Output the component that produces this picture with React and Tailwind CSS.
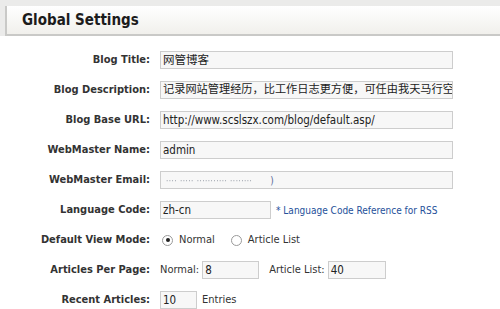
import React from 'react';

const font = { fontFamily: '"DejaVu Sans Condensed", "DejaVu Sans", "Noto Sans CJK SC", sans-serif' };

const Row = ({ label, children }) => (
  <div className="flex h-[30px] items-center">
    <label className="w-[151px] shrink-0 pr-px text-right text-[11px] font-bold text-[#333]">{label}</label>
    <div className="ml-[9px] flex items-center">{children}</div>
  </div>
);

const Field = ({ value, w = 'w-[293px]', size = 'text-[11.5px]', children }) => (
  <div className={`h-[18px] ${w} overflow-hidden whitespace-nowrap border border-[#cdcdcd] bg-[#f7f7f7] px-[2px] ${size} leading-[16px] text-[#222]`}>
    {children || value}
  </div>
);

const Radio = ({ checked, label }) => (
  <span className="flex items-center text-[11px] text-[#333]">
    <span className="mr-[6px] flex h-[11px] w-[11px] items-center justify-center rounded-full border border-[#9a9a9a] bg-white">
      {checked && <span className="h-[4px] w-[4px] rounded-full bg-[#222]" />}
    </span>
    {label}
  </span>
);

const App = () => {
  return (
    <main className="h-[309px] w-[500px] overflow-hidden bg-white" style={font}>
      <div className="bg-[#ebebea] pl-[5px] pt-[6px]">
        <div className="flex h-[30px] items-center border-b-2 border-l-2 border-[#c9c9c7] bg-gradient-to-b from-white to-[#f1f0ec] pl-[15px]">
          <h1 className="text-[15px] font-bold text-[#1c1c1c]">Global Settings</h1>
        </div>
      </div>

      <div className="pt-[9px]">
        <Row label="Blog Title:"><Field value="网管博客" /></Row>
        <Row label="Blog Description:">
          <Field size="text-[11.2px]" value="记录网站管理经历，比工作日志更方便，可任由我天马行空了" />
        </Row>
        <Row label="Blog Base URL:"><Field value="http://www.scslszx.com/blog/default.asp/" /></Row>
        <Row label="WebMaster Name:"><Field value="admin" /></Row>
        <Row label="WebMaster Email:">
          <Field>
            <span className="inline-block pl-[3px] text-[8px] tracking-[0.5px] text-[#9aa0aa] blur-[0.6px]">···· ····· ··········· ········</span>
            <span className="ml-[18px] text-[10px] text-[#5a6a9a]">)</span>
          </Field>
        </Row>
        <Row label="Language Code:">
          <Field value="zh-cn" w="w-[111px]" />
          <span className="ml-[5px] text-[10px] text-[#25509a]">* Language Code Reference for RSS</span>
        </Row>
        <Row label="Default View Mode:">
          <span className="ml-[2px] flex items-center gap-[16px]">
            <Radio checked label="Normal" />
            <Radio label="Article List" />
          </span>
        </Row>
        <Row label="Articles Per Page:">
          <span className="text-[11px] text-[#333]">Normal:</span>
          <span className="ml-[3px]"><Field value="8" w="w-[57px]" /></span>
          <span className="ml-[10px] text-[11px] text-[#333]">Article List:</span>
          <span className="ml-[3px]"><Field value="40" w="w-[58px]" /></span>
        </Row>
        <Row label="Recent Articles:">
          <Field value="10" w="w-[37px]" />
          <span className="ml-[5px] text-[11px] text-[#333]">Entries</span>
        </Row>
      </div>
    </main>
  );
};

export default App;
